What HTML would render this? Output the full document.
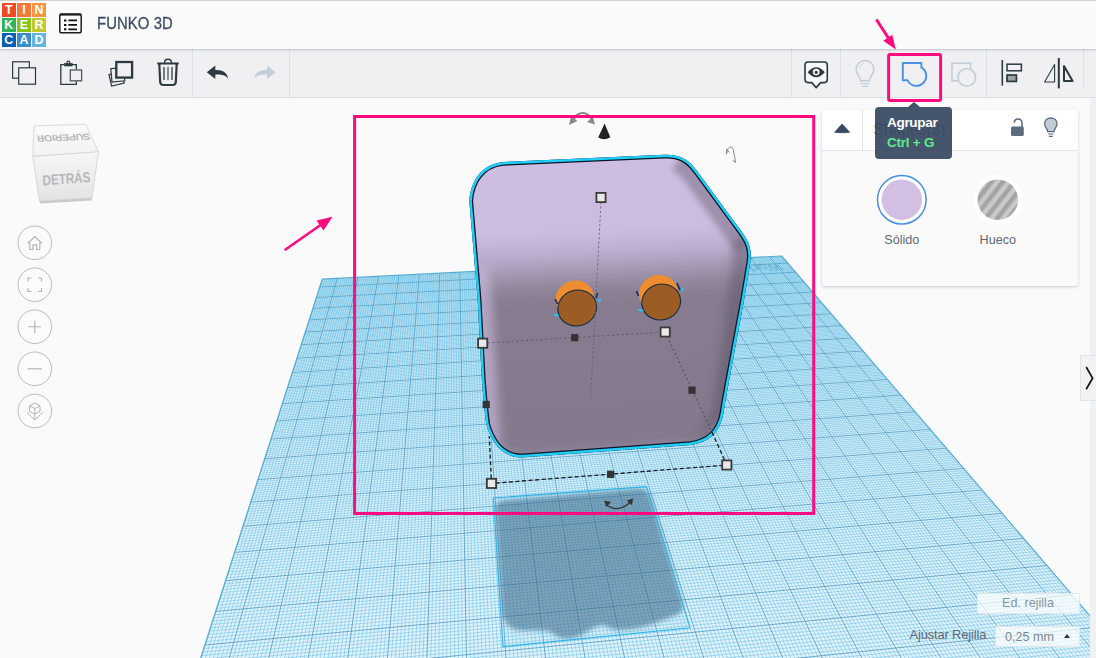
<!DOCTYPE html>
<html lang="es"><head><meta charset="utf-8"><title>FUNKO 3D</title>
<style>
html,body{margin:0;padding:0}
body{width:1096px;height:658px;overflow:hidden;position:relative;background:#fafafa;font-family:"Liberation Sans",sans-serif;color:#4a5a6a}
.abs{position:absolute}
#scene{position:absolute;left:0;top:0;width:1096px;height:658px}
#hdr{position:absolute;left:0;top:0;width:1096px;height:49px;background:#fafafb;box-shadow:0 1px 2px rgba(120,140,170,.45)}
#topline{position:absolute;left:0;top:0;width:1096px;height:1px;background:#cfcfcf}
#logo{position:absolute;left:2px;top:3px;width:44px;height:44px}
#logo i{position:absolute;width:13.7px;height:13.8px;font:bold 12.4px/14px "Liberation Sans",sans-serif;color:#fff;text-align:center;font-style:normal}
#title{position:absolute;left:97px;top:14px;font-size:16.8px;line-height:20px;color:#3b4d63;letter-spacing:0.1px;white-space:nowrap;transform:scaleX(0.885);transform-origin:0 0;-webkit-text-stroke:0.3px #3b4d63}
#tb{position:absolute;left:0;top:49px;width:1096px;height:48px;background:#f0f0f3;border-bottom:1px solid #d9dfe7}
.sep{position:absolute;top:49px;width:1px;height:48px;background:#d9e0e7}
#strip{position:absolute;left:1090px;top:98px;width:6px;height:560px;background:#f0f1f3}
#handle{position:absolute;left:1080px;top:355px;width:16px;height:46px;background:#f1f2f4;border:1px solid #dfe3ea;border-right:none;box-sizing:border-box}
#panel{position:absolute;left:822px;top:110px;width:256px;height:175.5px;background:#fafafa;border-radius:3px;box-shadow:0 1px 3px rgba(100,120,150,.35)}
#phead{position:absolute;left:0;top:0;width:256px;height:40px;background:#fff;border-bottom:1px solid #e1e6ec;border-radius:3px 3px 0 0}
#pdiv{position:absolute;left:40px;top:0;width:1px;height:40px;background:#e1e6ec}
#shapes{position:absolute;left:51.5px;top:10px;font-size:15.6px;line-height:20px;color:#33435a;letter-spacing:0px}
.lbl{position:absolute;top:232.6px;width:80px;text-align:center;font-size:12.6px;line-height:15px;color:#5d6976}
#tip{position:absolute;left:875px;top:107px;width:77px;height:52px;background:rgba(58,76,100,.95);border-radius:4px}
#tip:before{content:"";position:absolute;left:32.5px;top:-5px;border:6px solid transparent;border-top:none;border-bottom:5px solid rgba(58,76,100,.97)}
#tip b{position:absolute;left:12px;top:8px;font-size:13.6px;line-height:15px;color:#fff;letter-spacing:-0.35px}
#tip span{position:absolute;left:12px;top:28px;font-size:13.4px;line-height:15px;color:#62ea90;letter-spacing:-0.2px;font-weight:bold}
#edr{position:absolute;left:976.5px;top:593px;width:103px;height:21px;box-sizing:border-box;background:rgba(255,255,255,.72);border:1px solid rgba(225,228,232,.9);border-radius:2px;text-align:center;font-size:12.6px;line-height:19px;color:#8896a4}
#aj{position:absolute;left:909.5px;top:626.5px;font-size:12.8px;line-height:16px;color:#5d6873;white-space:nowrap;letter-spacing:-0.1px}
#dd{position:absolute;left:995px;top:625.5px;width:84.5px;height:21px;box-sizing:border-box;background:rgba(255,255,255,.72);border:1px solid rgba(225,228,232,.9);border-radius:2px;font-size:12.6px;line-height:20px;color:#7a8794;padding-left:9px}
#dd:after{content:"";position:absolute;left:68px;top:7.5px;border:3.2px solid transparent;border-top:none;border-bottom:4px solid #333}
</style></head><body>

<svg id="scene" width="1096" height="658" viewBox="0 0 1096 658">
<defs>
<clipPath id="wpclip"><rect x="0" y="98" width="1090" height="560"/></clipPath>
<clipPath id="planeclip"><polygon points="322.3,279.2 781.8,256.0 1135.7,669.3 162.7,776.3"/></clipPath>
<filter id="blur6" x="-20%" y="-20%" width="140%" height="140%"><feGaussianBlur stdDeviation="5"/></filter>
<filter id="blur2" x="-20%" y="-20%" width="140%" height="140%"><feGaussianBlur stdDeviation="2.2"/></filter>
<filter id="blur3" x="-20%" y="-20%" width="140%" height="140%"><feGaussianBlur stdDeviation="3"/></filter>
<filter id="blur10" x="-30%" y="-30%" width="160%" height="160%"><feGaussianBlur stdDeviation="9"/></filter>
<linearGradient id="gfront" gradientUnits="userSpaceOnUse" x1="600" y1="155" x2="613" y2="458">
<stop offset="0" stop-color="#cdbde1"/><stop offset="0.24" stop-color="#ccbce0"/><stop offset="0.274" stop-color="#c7b7db"/><stop offset="0.313" stop-color="#beafd1"/><stop offset="0.353" stop-color="#b0a2bf"/><stop offset="0.393" stop-color="#a094ad"/><stop offset="0.426" stop-color="#93889d"/><stop offset="0.459" stop-color="#8a7f93"/><stop offset="0.5" stop-color="#867b8f"/><stop offset="1" stop-color="#84798d"/>
</linearGradient>
<linearGradient id="gleft" x1="0" y1="0" x2="1" y2="0"><stop offset="0" stop-color="#c9b9dc" stop-opacity=".95"/><stop offset="1" stop-color="#c9b9dc" stop-opacity="0"/></linearGradient>
<linearGradient id="gright" x1="0" y1="0" x2="1" y2="0"><stop offset="0" stop-color="#5d5466" stop-opacity="0"/><stop offset="1" stop-color="#5d5466" stop-opacity=".75"/></linearGradient>
<clipPath id="boxclip"><path id="boxpath" d="M469.3 201 C470.5 183 480 164.5 503 162 L664 154.8 C680 154.2 688.5 159.5 697 171 L741.5 231.5 C749.5 242.5 752 250 750.3 262 L744 300 L725.5 400 L723.4 413 C720.5 430 711 442.5 690 445 L524 457.2 C505 458.3 492.5 446 486.2 424 L484 405 L481.9 380 L477.7 300 Z"/></clipPath>
</defs>
<g clip-path="url(#wpclip)">
<polygon points="322.3,279.2 781.8,256.0 1135.7,669.3 162.7,776.3" fill="#e0f2fa"/>
<g clip-path="url(#planeclip)">
<path d="M322.7 279.2L163.7 776.2M324.8 279.1L168.4 775.7M326.9 279.0L173.1 775.1M329.0 278.9L177.8 774.6M331.0 278.8L182.5 774.1M333.1 278.7L187.2 773.6M335.2 278.5L191.9 773.1M339.3 278.3L201.2 772.1M341.4 278.2L205.9 771.5M343.5 278.1L210.6 771.0M345.6 278.0L215.2 770.5M347.6 277.9L219.9 770.0M349.7 277.8L224.5 769.5M351.8 277.7L229.2 769.0M353.8 277.6L233.8 768.5M355.9 277.5L238.4 768.0M360.0 277.3L247.7 766.9M362.1 277.2L252.3 766.4M364.1 277.1L256.9 765.9M366.2 277.0L261.5 765.4M368.3 276.9L266.1 764.9M370.3 276.8L270.7 764.4M372.4 276.7L275.3 763.9M374.4 276.6L279.9 763.4M376.5 276.5L284.5 762.9M380.6 276.3L293.6 761.9M382.6 276.2L298.2 761.4M384.7 276.0L302.7 760.9M386.7 275.9L307.3 760.4M388.8 275.8L311.8 759.9M390.8 275.7L316.4 759.4M392.9 275.6L320.9 758.9M394.9 275.5L325.5 758.4M397.0 275.4L330.0 757.9M401.1 275.2L339.0 756.9M403.1 275.1L343.5 756.4M405.1 275.0L348.1 755.9M407.2 274.9L352.6 755.4M409.2 274.8L357.1 754.9M411.3 274.7L361.5 754.4M413.3 274.6L366.0 753.9M415.3 274.5L370.5 753.4M417.4 274.4L375.0 752.9M421.4 274.2L383.9 752.0M423.5 274.1L388.4 751.5M425.5 274.0L392.9 751.0M427.5 273.9L397.3 750.5M429.6 273.8L401.8 750.0M431.6 273.7L406.2 749.5M433.6 273.6L410.6 749.0M435.6 273.5L415.1 748.5M437.7 273.4L419.5 748.1M441.7 273.2L428.3 747.1M443.7 273.1L432.8 746.6M445.7 273.0L437.2 746.1M447.8 272.9L441.6 745.6M449.8 272.8L446.0 745.1M451.8 272.7L450.4 744.7M453.8 272.6L454.8 744.2M455.8 272.5L459.1 743.7M457.8 272.4L463.5 743.2M461.9 272.2L472.3 742.3M463.9 272.1L476.6 741.8M465.9 272.0L481.0 741.3M467.9 271.8L485.3 740.8M469.9 271.7L489.7 740.3M471.9 271.6L494.0 739.9M473.9 271.5L498.4 739.4M475.9 271.4L502.7 738.9M477.9 271.3L507.0 738.4M481.9 271.1L515.7 737.5M483.9 271.0L520.0 737.0M485.9 270.9L524.3 736.5M487.9 270.8L528.6 736.1M489.9 270.7L532.9 735.6M491.9 270.6L537.2 735.1M493.9 270.5L541.5 734.6M495.9 270.4L545.8 734.2M497.9 270.3L550.1 733.7M501.9 270.1L558.7 732.8M503.9 270.0L562.9 732.3M505.8 269.9L567.2 731.8M507.8 269.8L571.5 731.3M509.8 269.7L575.7 730.9M511.8 269.6L580.0 730.4M513.8 269.5L584.2 729.9M515.8 269.4L588.5 729.5M517.8 269.3L592.7 729.0M521.7 269.1L601.2 728.1M523.7 269.0L605.4 727.6M525.7 268.9L609.6 727.2M527.7 268.8L613.8 726.7M529.6 268.7L618.0 726.2M531.6 268.6L622.2 725.8M533.6 268.5L626.4 725.3M535.6 268.4L630.6 724.8M537.5 268.3L634.8 724.4M541.5 268.1L643.2 723.5M543.5 268.0L647.4 723.0M545.4 267.9L651.5 722.5M547.4 267.8L655.7 722.1M549.4 267.7L659.9 721.6M551.3 267.6L664.0 721.2M553.3 267.5L668.2 720.7M555.3 267.4L672.3 720.3M557.2 267.3L676.5 719.8M561.1 267.1L684.8 718.9M563.1 267.0L688.9 718.4M565.1 266.9L693.0 718.0M567.0 266.8L697.2 717.5M569.0 266.7L701.3 717.1M570.9 266.6L705.4 716.6M572.9 266.5L709.5 716.2M574.8 266.4L713.6 715.7M576.8 266.4L717.7 715.3M580.7 266.2L725.9 714.4M582.6 266.1L730.0 713.9M584.6 266.0L734.1 713.5M586.5 265.9L738.2 713.0M588.5 265.8L742.2 712.6M590.4 265.7L746.3 712.1M592.4 265.6L750.4 711.7M594.3 265.5L754.4 711.2M596.3 265.4L758.5 710.8M600.2 265.2L766.6 709.9M602.1 265.1L770.7 709.4M604.0 265.0L774.7 709.0M606.0 264.9L778.7 708.6M607.9 264.8L782.8 708.1M609.9 264.7L786.8 707.7M611.8 264.6L790.8 707.2M613.7 264.5L794.9 706.8M615.7 264.4L798.9 706.3M619.5 264.2L806.9 705.5M621.5 264.1L810.9 705.0M623.4 264.0L814.9 704.6M625.3 263.9L818.9 704.1M627.2 263.8L822.9 703.7M629.2 263.7L826.9 703.3M631.1 263.6L830.8 702.8M633.0 263.5L834.8 702.4M634.9 263.4L838.8 702.0M638.8 263.2L846.7 701.1M640.7 263.1L850.7 700.6M642.6 263.0L854.7 700.2M644.6 262.9L858.6 699.8M646.5 262.8L862.6 699.3M648.4 262.7L866.5 698.9M650.3 262.6L870.4 698.5M652.2 262.5L874.4 698.0M654.1 262.4L878.3 697.6M658.0 262.3L886.2 696.7M659.9 262.2L890.1 696.3M661.8 262.1L894.0 695.9M663.7 262.0L897.9 695.5M665.6 261.9L901.8 695.0M667.5 261.8L905.7 694.6M669.4 261.7L909.6 694.2M671.3 261.6L913.5 693.7M673.2 261.5L917.4 693.3M677.0 261.3L925.2 692.5M678.9 261.2L929.1 692.0M680.9 261.1L932.9 691.6M682.8 261.0L936.8 691.2M684.7 260.9L940.7 690.7M686.5 260.8L944.6 690.3M688.4 260.7L948.4 689.9M690.3 260.6L952.3 689.5M692.2 260.5L956.1 689.1M696.0 260.3L963.8 688.2M697.9 260.2L967.7 687.8M699.8 260.1L971.5 687.4M701.7 260.0L975.3 686.9M703.6 259.9L979.1 686.5M705.5 259.9L983.0 686.1M707.4 259.8L986.8 685.7M709.3 259.7L990.6 685.3M711.2 259.6L994.4 684.8M714.9 259.4L1002.0 684.0M716.8 259.3L1005.8 683.6M718.7 259.2L1009.6 683.2M720.6 259.1L1013.4 682.8M722.5 259.0L1017.2 682.3M724.3 258.9L1021.0 681.9M726.2 258.8L1024.8 681.5M728.1 258.7L1028.6 681.1M730.0 258.6L1032.3 680.7M733.7 258.4L1039.9 679.8M735.6 258.3L1043.6 679.4M737.5 258.2L1047.4 679.0M739.3 258.1L1051.1 678.6M741.2 258.0L1054.9 678.2M743.1 258.0L1058.6 677.8M745.0 257.9L1062.4 677.4M746.8 257.8L1066.1 677.0M748.7 257.7L1069.8 676.5M752.4 257.5L1077.3 675.7M754.3 257.4L1081.0 675.3M756.2 257.3L1084.7 674.9M758.0 257.2L1088.5 674.5M759.9 257.1L1092.2 674.1M761.7 257.0L1095.9 673.7M763.6 256.9L1099.6 673.3M765.5 256.8L1103.3 672.9M767.3 256.7L1107.0 672.5M771.0 256.5L1114.4 671.7M772.9 256.4L1118.1 671.2M774.8 256.4L1121.7 670.8M776.6 256.3L1125.4 670.4M778.5 256.2L1129.1 670.0M780.3 256.1L1132.8 669.6M322.0 280.2L782.5 256.9M321.7 281.2L783.3 257.7M321.4 282.1L784.0 258.6M321.0 283.1L784.8 259.5M320.7 284.1L785.5 260.4M320.4 285.1L786.3 261.3M320.1 286.1L787.1 262.2M319.4 288.2L788.6 263.9M319.1 289.2L789.4 264.9M318.8 290.2L790.2 265.8M318.4 291.2L790.9 266.7M318.1 292.3L791.7 267.6M317.8 293.3L792.5 268.5M317.4 294.3L793.3 269.4M317.1 295.4L794.1 270.4M316.8 296.4L794.9 271.3M316.1 298.6L796.5 273.2M315.7 299.6L797.3 274.1M315.4 300.7L798.1 275.1M315.0 301.8L799.0 276.0M314.7 302.9L799.8 277.0M314.3 304.0L800.6 278.0M314.0 305.1L801.4 278.9M313.6 306.2L802.3 279.9M313.3 307.3L803.1 280.9M312.6 309.5L804.8 282.9M312.2 310.7L805.6 283.8M311.8 311.8L806.5 284.8M311.5 312.9L807.4 285.8M311.1 314.1L808.2 286.9M310.7 315.2L809.1 287.9M310.4 316.4L810.0 288.9M310.0 317.5L810.8 289.9M309.6 318.7L811.7 290.9M308.9 321.1L813.5 293.0M308.5 322.2L814.4 294.0M308.1 323.4L815.3 295.1M307.7 324.6L816.2 296.1M307.3 325.8L817.1 297.2M306.9 327.1L818.0 298.3M306.5 328.3L818.9 299.3M306.2 329.5L819.8 300.4M305.8 330.7L820.8 301.5M305.0 333.2L822.6 303.7M304.6 334.5L823.6 304.8M304.2 335.7L824.5 305.9M303.8 337.0L825.4 307.0M303.3 338.3L826.4 308.1M302.9 339.5L827.4 309.2M302.5 340.8L828.3 310.3M302.1 342.1L829.3 311.5M301.7 343.4L830.3 312.6M300.8 346.0L832.2 314.9M300.4 347.4L833.2 316.0M300.0 348.7L834.2 317.2M299.6 350.0L835.2 318.4M299.1 351.4L836.2 319.5M298.7 352.7L837.2 320.7M298.3 354.1L838.2 321.9M297.8 355.5L839.3 323.1M297.4 356.8L840.3 324.3M296.5 359.6L842.3 326.7M296.0 361.0L843.4 327.9M295.6 362.4L844.4 329.2M295.1 363.8L845.5 330.4M294.7 365.3L846.5 331.6M294.2 366.7L847.6 332.9M293.8 368.1L848.7 334.1M293.3 369.6L849.8 335.4M292.8 371.0L850.8 336.6M291.9 374.0L853.0 339.2M291.4 375.5L854.1 340.5M290.9 377.0L855.2 341.8M290.4 378.5L856.3 343.1M290.0 380.0L857.5 344.4M289.5 381.5L858.6 345.7M289.0 383.0L859.7 347.0M288.5 384.5L860.9 348.3M288.0 386.1L862.0 349.7M287.0 389.2L864.3 352.4M286.5 390.8L865.5 353.7M286.0 392.4L866.6 355.1M285.5 394.0L867.8 356.5M284.9 395.6L869.0 357.8M284.4 397.2L870.2 359.2M283.9 398.8L871.4 360.6M283.4 400.4L872.6 362.0M282.9 402.1L873.8 363.4M281.8 405.4L876.2 366.3M281.3 407.1L877.5 367.7M280.7 408.8L878.7 369.2M280.2 410.5L880.0 370.6M279.6 412.2L881.2 372.1M279.1 413.9L882.5 373.6M278.5 415.6L883.7 375.0M278.0 417.4L885.0 376.5M277.4 419.1L886.3 378.0M276.3 422.6L888.9 381.1M275.7 424.4L890.2 382.6M275.1 426.2L891.5 384.1M274.5 428.0L892.8 385.7M273.9 429.9L894.2 387.2M273.4 431.7L895.5 388.8M272.8 433.5L896.8 390.4M272.2 435.4L898.2 391.9M271.6 437.3L899.6 393.5M270.4 441.0L902.3 396.7M269.7 442.9L903.7 398.4M269.1 444.9L905.1 400.0M268.5 446.8L906.5 401.6M267.9 448.7L907.9 403.3M267.3 450.7L909.3 404.9M266.6 452.7L910.8 406.6M266.0 454.7L912.2 408.3M265.3 456.7L913.7 410.0M264.0 460.7L916.6 413.4M263.4 462.7L918.1 415.1M262.7 464.8L919.5 416.9M262.1 466.9L921.0 418.6M261.4 469.0L922.6 420.4M260.7 471.1L924.1 422.2M260.0 473.2L925.6 423.9M259.4 475.3L927.1 425.7M258.7 477.4L928.7 427.5M257.3 481.8L931.8 431.2M256.6 484.0L933.4 433.0M255.9 486.2L935.0 434.9M255.2 488.4L936.6 436.7M254.4 490.6L938.2 438.6M253.7 492.9L939.8 440.5M253.0 495.2L941.4 442.4M252.3 497.4L943.1 444.3M251.5 499.7L944.7 446.3M250.0 504.4L948.0 450.2M249.3 506.8L949.7 452.1M248.5 509.1L951.4 454.1M247.7 511.5L953.1 456.1M247.0 513.9L954.9 458.1M246.2 516.4L956.6 460.1M245.4 518.8L958.3 462.2M244.6 521.3L960.1 464.2M243.8 523.8L961.9 466.3M242.2 528.8L965.4 470.5M241.4 531.3L967.2 472.6M240.6 533.9L969.1 474.7M239.7 536.5L970.9 476.8M238.9 539.1L972.7 479.0M238.0 541.7L974.6 481.2M237.2 544.3L976.5 483.3M236.3 547.0L978.4 485.5M235.5 549.7L980.2 487.8M233.7 555.1L984.1 492.3M232.9 557.9L986.0 494.5M232.0 560.6L988.0 496.8M231.1 563.4L990.0 499.1M230.2 566.3L991.9 501.4M229.3 569.1L993.9 503.7M228.3 572.0L995.9 506.1M227.4 574.8L998.0 508.5M226.5 577.8L1000.0 510.9M224.6 583.7L1004.2 515.7M223.6 586.6L1006.2 518.1M222.7 589.6L1008.3 520.6M221.7 592.7L1010.5 523.1M220.7 595.7L1012.6 525.6M219.7 598.8L1014.8 528.1M218.7 601.9L1016.9 530.6M217.7 605.1L1019.1 533.2M216.7 608.3L1021.3 535.7M214.6 614.7L1025.8 541.0M213.6 617.9L1028.1 543.6M212.5 621.2L1030.3 546.3M211.5 624.5L1032.6 548.9M210.4 627.9L1034.9 551.6M209.3 631.2L1037.3 554.4M208.2 634.6L1039.6 557.1M207.1 638.0L1042.0 559.9M206.0 641.5L1044.4 562.7M203.8 648.5L1049.2 568.3M202.6 652.1L1051.6 571.2M201.5 655.7L1054.1 574.0M200.3 659.3L1056.6 576.9M199.1 662.9L1059.1 579.9M197.9 666.6L1061.6 582.8M196.8 670.4L1064.2 585.8M195.5 674.1L1066.8 588.8M194.3 677.9L1069.4 591.8M191.9 685.6L1074.6 598.0M190.6 689.5L1077.3 601.1M189.3 693.4L1079.9 604.2M188.1 697.4L1082.7 607.4M186.8 701.4L1085.4 610.6M185.5 705.5L1088.1 613.8M184.2 709.6L1090.9 617.0M182.8 713.7L1093.7 620.3M181.5 717.9L1096.5 623.6M178.8 726.4L1102.3 630.3M177.4 730.7L1105.2 633.7M176.0 735.1L1108.1 637.1M174.6 739.5L1111.1 640.5M173.1 743.9L1114.0 644.0M171.7 748.4L1117.0 647.5M170.3 752.9L1120.1 651.1M168.8 757.5L1123.1 654.7M167.3 762.1L1126.2 658.3M164.3 771.5L1132.5 665.6" stroke="#4bb4e1" stroke-width="0.8" stroke-opacity="0.5" fill="none"/>
<path d="M337.3 278.4L196.6 772.6M358.0 277.4L243.1 767.5M378.5 276.4L289.0 762.4M399.0 275.3L334.5 757.4M419.4 274.3L379.5 752.5M439.7 273.3L423.9 747.6M459.8 272.3L467.9 742.7M479.9 271.2L511.4 738.0M499.9 270.2L554.4 733.2M519.7 269.2L596.9 728.5M539.5 268.2L639.0 723.9M559.2 267.2L680.6 719.3M578.7 266.3L721.8 714.8M598.2 265.3L762.6 710.3M617.6 264.3L802.9 705.9M636.9 263.3L842.8 701.5M656.1 262.3L882.2 697.2M675.1 261.4L921.3 692.9M694.1 260.4L960.0 688.6M713.0 259.5L998.2 684.4M731.8 258.5L1036.1 680.3M750.6 257.6L1073.6 676.1M769.2 256.6L1110.7 672.1M319.8 287.1L787.8 263.1M316.4 297.5L795.7 272.2M312.9 308.4L803.9 281.9M309.2 319.9L812.6 292.0M305.4 332.0L821.7 302.6M301.3 344.7L831.2 313.7M296.9 358.2L841.3 325.5M292.4 372.5L851.9 337.9M287.5 387.7L863.1 351.0M282.3 403.7L875.0 364.9M276.8 420.9L887.6 379.5M271.0 439.1L900.9 395.1M264.7 458.7L915.1 411.7M258.0 479.6L930.2 429.4M250.8 502.1L946.4 448.2M243.0 526.3L963.6 468.4M234.6 552.4L982.2 490.0M225.5 580.7L1002.1 513.3M215.7 611.4L1023.6 538.3M204.9 645.0L1046.8 565.5M193.1 681.7L1072.0 594.9M180.1 722.1L1099.4 626.9M165.8 766.8L1129.4 661.9" stroke="#4496c0" stroke-width="1" stroke-opacity="0.75" fill="none"/>
</g>
<text transform="matrix(-1.55 0.08 -0.9 -1.05 778.5 263.4)" font-family="Liberation Sans, sans-serif" font-weight="bold" font-size="9.5" fill="#3f98c4" fill-opacity="0.4">Workplane</text>
<polygon points="322.3,279.2 781.8,256.0 1135.7,669.3 162.7,776.3" fill="none" stroke="#55aad3" stroke-width="1.2"/>
<!-- shadow -->
<g clip-path="url(#planeclip)">
<path d="M495.6 510 Q494.8 501.8 503 500.6 L638 488.8 Q647 488.2 650.5 497 L683 604 Q684 611 678 614 Q667 619 647 625.7 Q630 630 618.6 630 Q611 629.5 606 625.7 Q602 624.5 598.6 625.7 Q590 629 584.3 633 Q575 638.5 567 638.6 Q560 638.2 555.7 635.7 Q550 631 545 630.6 L521.4 630.6 Q511 629.5 507 624.3 Q503 619 502 612 L498.6 555.7 Z" fill="#22496b" fill-opacity="0.5" filter="url(#blur2)"/>
</g>
<polygon points="493.4,498 646.6,486.6 690,627.7 502.9,646.6" fill="#8fd0ee" fill-opacity="0.12" stroke="#2fb4e6" stroke-width="1.15"/>
</g>

<g>
<path d="M469.3 201 C470.5 183 480 164.5 503 162 L664 154.8 C680 154.2 688.5 159.5 697 171 L741.5 231.5 C749.5 242.5 752 250 750.3 262 L744 300 L725.5 400 L723.4 413 C720.5 430 711 442.5 690 445 L524 457.2 C505 458.3 492.5 446 486.2 424 L484 405 L481.9 380 L477.7 300 Z" fill="url(#gfront)"/>
<g clip-path="url(#boxclip)">
<!-- top-right chamfer shading -->
<path d="M684 152 L704 166 L756 240 L736 252 L688 186 C684 180 680 175 672 170 Z" fill="#7f748a" fill-opacity="0.62" filter="url(#blur3)"/>
<!-- right side darker -->
<path d="M756 236 L748 300 L726 420 L704 452 L694 446 L712 410 L728 300 L734 240 Z" fill="#574e61" fill-opacity="0.45" filter="url(#blur6)"/>
<!-- left light band -->
<path d="M462 266 L468 300 L476 405 L480 440 L502 466 L498 400 L492 300 L488 266 Z" fill="#cdbde1" fill-opacity="0.62" filter="url(#blur6)"/>
<!-- bottom rim slightly lighter -->
<path d="M492 444 L520 463 L700 451 L728 424 L718 420 L694 439 L522 451 Z" fill="#ad9fba" fill-opacity="0.22" filter="url(#blur3)"/>
<path d="M469.3 201 C470.5 183 480 164.5 503 162 L664 154.8 C680 154.2 688.5 159.5 697 171 L741.5 231.5 C749.5 242.5 752 250 750.3 262 L744 300 L725.5 400 L723.4 413 C720.5 430 711 442.5 690 445 L524 457.2 C505 458.3 492.5 446 486.2 424 L484 405 L481.9 380 L477.7 300 Z" fill="none" stroke="#0d1626" stroke-width="7.6" stroke-linejoin="round"/>
<path d="M469.3 201 C470.5 183 480 164.5 503 162 L664 154.8 C680 154.2 688.5 159.5 697 171 L741.5 231.5 C749.5 242.5 752 250 750.3 262 L744 300 L725.5 400 L723.4 413 C720.5 430 711 442.5 690 445 L524 457.2 C505 458.3 492.5 446 486.2 424 L484 405 L481.9 380 L477.7 300 Z" fill="none" stroke="#1fcff8" stroke-width="5" stroke-linejoin="round"/>
</g>
</g>

<g>
<ellipse cx="574.7" cy="298.5" rx="19.5" ry="17.8" transform="rotate(-18 574.7 298.5)" fill="#ee8d2f"/>
<path d="M558.7 305 L556.2 295.5 L592.2 291.5 L595.7 302 Z" fill="#ee8d2f"/>
<ellipse cx="577.2" cy="308" rx="19.5" ry="17.8" transform="rotate(-18 577.2 308)" fill="#9b5d24" stroke="#142c47" stroke-width="1.1"/>
</g>
<g>
<ellipse cx="658.2" cy="293" rx="19.5" ry="17.8" transform="rotate(-18 658.2 293)" fill="#ee8d2f"/>
<path d="M642.7 299 L639.7 290 L675.7 286 L679.7 296 Z" fill="#ee8d2f"/>
<ellipse cx="661.2" cy="302" rx="19.5" ry="17.8" transform="rotate(-18 661.2 302)" fill="#9b5d24" stroke="#142c47" stroke-width="1.1"/>
</g>
<path d="M557.5 304 l-2.5 -5 M596 298 l1.5 -5 M638.5 296 l-2 -5 M680 290 l-3 -7" stroke="#142c47" stroke-width="1.6" fill="none"/>
<path d="M555 314.5 l3 1.2 M599 301 l1.8 -2 M639 310 l3.5 0.5 M681.5 290.5 l1.5 -2" stroke="#24c4f2" stroke-width="2" fill="none" stroke-linecap="round"/>

<path d="M601 202 L590.7 396.5" stroke="#6a6370" stroke-width="0.9" stroke-dasharray="2.2 2.2" fill="none"/>
<path d="M482.7 343.2 L665.2 332" stroke="#5b5560" stroke-width="0.9" stroke-dasharray="2.2 2.6" fill="none"/>
<path d="M665.2 332 L712 432" stroke="#4b4650" stroke-width="0.9" stroke-dasharray="2.2 2.4" fill="none"/>
<path d="M712 432 L726.8 465 L491.5 483.4 L489.3 436" stroke="#1d1d1d" stroke-width="1.3" stroke-dasharray="4 2.6" fill="none"/>
<rect x="596.4" y="192.9" width="9.2" height="9.2" fill="#e9e9e9" stroke="#3a3a3a" stroke-width="1.8"/><rect x="478.09999999999997" y="338.59999999999997" width="9.2" height="9.2" fill="#e9e9e9" stroke="#3a3a3a" stroke-width="1.8"/><rect x="660.6" y="327.4" width="9.2" height="9.2" fill="#e9e9e9" stroke="#3a3a3a" stroke-width="1.8"/><rect x="722.1999999999999" y="460.4" width="9.2" height="9.2" fill="#e9e9e9" stroke="#3a3a3a" stroke-width="1.8"/><rect x="486.9" y="478.79999999999995" width="9.2" height="9.2" fill="#e9e9e9" stroke="#3a3a3a" stroke-width="1.8"/><rect x="571.1" y="334.09999999999997" width="7.2" height="7.2" fill="#333"/><rect x="688.4" y="386.59999999999997" width="7.2" height="7.2" fill="#333"/><rect x="482.59999999999997" y="400.9" width="7.2" height="7.2" fill="#333"/><rect x="607.0" y="470.7" width="7.2" height="7.2" fill="#333"/>
<path d="M573.2 121.5 C576 110.2 589 110.2 591.8 120.5" stroke="#8a8a8a" stroke-width="2" fill="none"/>
<path d="M569 125 l2 -8.5 l6.5 4.5 z M595 124.5 l-8 -2.5 l6 -5 z" fill="#8a8a8a"/>
<path d="M604.6 123.4 L610.3 137.2 Q604.5 141 598.2 137.6 Z" fill="#222"/>
<path d="M727 153 C727 146 733 145 733.5 151 C734 155 735 157 735.5 162 M726.2 154.5 l0.5 -5 l3 3 M735.5 163 l-2.5 -3" stroke="#777" stroke-width="0.9" fill="none"/>
<path d="M606 504.5 Q618 514 631 501.5" stroke="#333" stroke-width="1.4" fill="none"/>
<path d="M604.2 500.5 l6.8 1.6 l-4.8 4.8 z M633.2 498.2 l-1.3 7 l-5.2 -4.6 z" fill="#333"/>


</svg>


<svg class="abs" style="left:0;top:100px" width="160" height="340" viewBox="0 100 160 340">
<defs>
<linearGradient id="cf" x1="0" y1="0" x2="0" y2="1"><stop offset="0" stop-color="#f6f6f6"/><stop offset="1" stop-color="#e3e3e3"/></linearGradient>
<linearGradient id="ct" x1="0" y1="0" x2="0" y2="1"><stop offset="0" stop-color="#fbfbfb"/><stop offset="1" stop-color="#f2f2f2"/></linearGradient>
</defs>
<polygon points="39.6,201 92,197.8 91.6,200.4 40.2,203.6" fill="#c9c9c9"/>
<polygon points="34,126 85.6,124.3 98.5,151.8 32.8,156.4" fill="url(#ct)" stroke="#d2d2d2" stroke-width="0.8"/>
<polygon points="32.8,156.4 98.5,151.8 92,197.8 39.4,201" fill="url(#cf)" stroke="#d2d2d2" stroke-width="0.8"/>
<text transform="matrix(-1.0 0.035 -0.2 -0.86 89.2 133.6)" font-family="Liberation Sans, sans-serif" font-weight="bold" font-size="10.6" fill="#b9b9bd" letter-spacing="-0.3">SUPERIOR</text>
<text transform="matrix(0.81 -0.057 0.05 1 42.8 185.4)" font-family="Liberation Sans, sans-serif" font-weight="bold" font-size="14.6" fill="#b7b7bd" letter-spacing="-0.2">DETRÁS</text>
<g fill="#fbfbfb" stroke="#b1b4b9" stroke-width="0.9">
<circle cx="34.8" cy="242.8" r="16.8"/><circle cx="34.8" cy="284.7" r="16.8"/><circle cx="34.8" cy="326.7" r="16.8"/><circle cx="34.8" cy="368.8" r="16.8"/><circle cx="34.8" cy="411" r="16.8"/>
</g>
<g fill="none" stroke="#b1b4b9" stroke-width="1.15">
<path d="M27.5 243.5 L34.8 236.5 L42.1 243.5 M29.8 242.5 V249.5 H33 V244.8 H36.6 V249.5 H39.8 V242.5"/>
<path d="M28 281.5 V278 H31.5 M38 278 H41.5 V281.5 M41.5 288 V291.5 H38 M31.5 291.5 H28 V288"/>
<path d="M28.5 326.7 H41 M34.8 320.4 V333"/>
<path d="M27.5 368.8 H42"/>
<path d="M34.8 403 L40 405.8 V411.5 L34.8 414.3 L29.6 411.5 V405.8 Z M29.6 405.8 L34.8 408.6 L40 405.8 M34.8 408.6 V419.5 M27 412.5 L34.8 420 L42.6 412.5" stroke-width="1"/>
</g>
</svg>

<div id="strip"></div>
<div id="handle"><svg width="16" height="45" viewBox="0 0 16 45" style="position:absolute;left:-1px;top:-1px"><path d="M6.2 12 L12.6 23.2 L6.2 34.2" fill="none" stroke="#111" stroke-width="1.7"/></svg></div>
<div id="panel"><div id="phead"><div id="pdiv"></div><div id="shapes">Shapes(3)</div></div></div>

<svg class="abs" style="left:822px;top:110px" width="256" height="176" viewBox="822 110 256 176">
<path d="M834.6 132.2 L842.1 124 L849.6 132.2 Q842 133.4 834.6 132.2 Z" fill="#39495f" stroke="#39495f" stroke-width="0.8" stroke-linejoin="round"/>
<!-- lock -->
<path d="M1022 127 V123.2 Q1021.8 119 1018 119 Q1014.6 119 1014.2 122.6" fill="none" stroke="#5b6b7e" stroke-width="1.6"/>
<rect x="1011" y="126.4" width="12.8" height="9.6" rx="1.6" fill="#5b6b7e"/>
<!-- bulb -->
<path d="M1047.6 131.6 C1047.6 128.6 1044.6 127.6 1044.6 123.8 C1044.6 120.2 1047.3 118 1050.8 118 C1054.3 118 1057 120.2 1057 123.8 C1057 127.6 1054 128.6 1054 131.6 Z" fill="#c3ccd6" stroke="#5b6b7e" stroke-width="1.3"/>
<path d="M1048 134 H1053.6 M1048.8 136.4 H1052.8" stroke="#5b6b7e" stroke-width="1.1"/>
<!-- solid -->
<circle cx="901.8" cy="199.7" r="24.3" fill="#fff" stroke="#4a8fe2" stroke-width="1.5"/>
<circle cx="901.8" cy="199.7" r="20.2" fill="#d3bfe4"/>
<!-- hole -->
<defs><pattern id="stripes" width="9" height="9" patternUnits="userSpaceOnUse" patternTransform="rotate(-52)"><rect width="9" height="9" fill="#c9c9c9"/><rect width="9" height="4.5" fill="#a4a4a4"/></pattern></defs>
<circle cx="997.8" cy="199.7" r="24.8" fill="#fff"/>
<circle cx="997.8" cy="199.7" r="20.2" fill="url(#stripes)"/>
</svg>

<div class="lbl" style="left:861.8px">Sólido</div>
<div class="lbl" style="left:957.8px">Hueco</div>
<div id="edr">Ed. rejilla</div>
<div id="aj">Ajustar Rejilla</div>
<div id="dd">0,25 mm</div>
<div id="tb"></div>
<div class="sep" style="left:192px"></div><div class="sep" style="left:289px"></div><div class="sep" style="left:791px"></div><div class="sep" style="left:840px"></div><div class="sep" style="left:889px"></div><div class="sep" style="left:986px"></div><div class="sep" style="left:1083px;height:40px"></div>

<svg class="abs" style="left:0;top:49px" width="1096" height="49" viewBox="0 49 1096 49">
<!-- list icon lives in header, drawn in separate svg -->
<g fill="#f0f0f3" stroke="#2b3a40" stroke-width="1.2">
<rect x="12.6" y="61.8" width="16.8" height="16.4"/>
<rect x="18.7" y="67.8" width="16.8" height="16.4"/>
</g>
<!-- paste -->
<g fill="none" stroke="#2b3a40" stroke-width="1.3">
<path d="M64.5 64.6 H60.8 V84.3 H76.3 V81.2 M72 64.6 H76.3 V69.5"/>
<rect x="64.6" y="63.4" width="7.6" height="2.6" fill="#2b3a40" stroke-width="0.6"/><circle cx="68.4" cy="62.6" r="1.5" fill="none" stroke-width="1.1"/>
<rect x="70.3" y="70" width="11.3" height="10.8" stroke="#4d585c" fill="#f0f0f3"/>
</g>
<!-- duplicate -->
<g fill="#f0f0f3" stroke="#2b3a40" stroke-width="1.2">
<path d="M109 74.6 L121 71.8 L124.2 83 L111.6 86 Z"/>
<path d="M110.8 68.6 L123.6 67.6 L124.8 80.8 L112 82 Z"/>
<rect x="116.3" y="62" width="15.8" height="15.6" stroke-width="2.3"/>
</g>
<!-- trash -->
<g fill="none" stroke="#2b3a40" stroke-width="2" stroke-linecap="round">
<path d="M158 63.4 H178"/>
<path d="M164.6 62.6 Q164.6 59.2 168 59.2 Q171.4 59.2 171.4 62.6" stroke-width="1.4"/>
<path d="M159.3 64 L160.2 82 Q160.4 85 163.4 85 H172.6 Q175.6 85 175.8 82 L176.7 64" stroke-width="2.2"/>
<path d="M164 67.5 V79.5 M172 67.5 V79.5" stroke-width="1.3"/>
<path d="M168 67.5 V79.5" stroke-width="1.6" stroke="#6b7478"/>
</g>
<!-- undo -->
<path d="M206.8 72.3 L215.3 65.6 V70 C222.5 69.6 227.5 72.6 228.2 79 C226 75.4 222.2 74.4 215.3 74.6 V79 Z" fill="#2b3a40"/>
<!-- redo -->
<path d="M275.6 72.3 L267.1 65.6 V70 C259.9 69.6 254.9 72.6 254.2 79 C256.4 75.4 260.2 74.4 267.1 74.6 V79 Z" fill="#c3cfdb"/>
<!-- eye bubble -->
<g>
<path d="M808 62 H824.4 Q827.3 62 827.3 65 V79.6 Q827.3 82.6 824.4 82.6 H820.6 L816.2 87.6 L811.8 82.6 H808 Q805 82.6 805 79.6 V65 Q805 62 808 62 Z" fill="#f6f7f8" stroke="#2b3a40" stroke-width="1.6" stroke-linejoin="round"/>
<path d="M807.6 72.3 Q816.2 62.4 824.8 72.3 Q816.2 82.2 807.6 72.3 Z" fill="#2b3a40"/>
<ellipse cx="816.2" cy="72.1" rx="3.4" ry="3.3" fill="#f6f7f8"/>
<circle cx="816.2" cy="72.3" r="1.6" fill="#2b3a40"/>
</g>
<!-- bulb light -->
<g fill="none" stroke="#c3cfdb" stroke-width="1.7" stroke-linecap="round">
<path d="M860.6 80.8 C860.6 76.5 856.2 75 856.2 69.6 C856.2 64 860 60.6 865 60.6 C870 60.6 873.8 64 873.8 69.6 C873.8 75 869.4 76.5 869.4 80.8 Z"/>
<path d="M861 83.6 H869 M862.2 86.4 H867.8" stroke-width="1.4"/>
<path d="M859.6 68 Q860.4 64.6 863.4 63.6" stroke-width="0.9"/>
</g>
<!-- group (blue) -->
<path d="M902.8 63 H921.4 V67.6 C926.6 70.4 928 77.8 923.6 82.6 C919.4 87.2 912.4 87 908.6 82 L907.6 80.3 H902.8 Z" fill="none" stroke="#4a8fe2" stroke-width="1.9" stroke-linejoin="round"/>
<!-- ungroup (light) -->
<g fill="#f0f0f3" stroke="#c3cfdb" stroke-width="1.7">
<rect x="952" y="63.2" width="18.6" height="17.6"/>
<circle cx="966.8" cy="77.4" r="8.8"/>
</g>
<!-- align -->
<g fill="none" stroke="#2b3a40">
<path d="M1002.3 60 V85.6" stroke-width="1.6"/>
<rect x="1007" y="64.2" width="14.4" height="6.6" stroke-width="1.5"/>
<rect x="1007" y="75" width="9.4" height="6.4" stroke-width="1.7" fill="#9ea3a6"/>
</g>
<!-- mirror -->
<g stroke="#2b3a40" stroke-linejoin="round">
<path d="M1058.8 58 V88.4" stroke-width="2" />
<path d="M1054.6 64.6 V82 H1044.6 Z" fill="none" stroke-width="1.1"/>
<path d="M1064 66 V81 H1072.6 Z" fill="none" stroke-width="2"/>
</g>
</svg>

<div id="hdr"><div id="logo"><i style="left:0.00px;top:0.00px;background:#f04a24">T</i><i style="left:15.05px;top:0.00px;background:#f5793b">I</i><i style="left:30.10px;top:0.00px;background:#f8943f">N</i><i style="left:0.00px;top:15.00px;background:#2fb457">K</i><i style="left:15.05px;top:15.00px;background:#86c518">E</i><i style="left:30.10px;top:15.00px;background:#c4ca2d">R</i><i style="left:0.00px;top:30.00px;background:#0a60b0">C</i><i style="left:15.05px;top:30.00px;background:#3b8fcb">A</i><i style="left:30.10px;top:30.00px;background:#63b4de">D</i></div><div id="title">FUNKO 3D</div></div>

<svg class="abs" style="left:55px;top:8px" width="32" height="32" viewBox="55 8 32 32">
<rect x="59.8" y="14.2" width="21.4" height="18.6" rx="1.8" fill="#fdfdfd" stroke="#1e1e1e" stroke-width="1.5"/>
<path d="M59.8 14.5 H81.2" stroke="#1e1e1e" stroke-width="2.2"/>
<path d="M64 20.4 h2.4 M64 24.9 h2.4 M64 29.3 h2.4" stroke="#111" stroke-width="2"/>
<path d="M68.4 20.4 h8.6 M68.4 24.9 h8.6 M68.4 29.3 h8.6" stroke="#111" stroke-width="1.7"/>
</svg>

<div id="topline"></div>
<div id="tip"><b>Agrupar</b><span>Ctrl + G</span></div>

<svg class="abs" style="left:0;top:0;pointer-events:none" width="1096" height="658" viewBox="0 0 1096 658">

<g fill="none" stroke="#ff0a80" stroke-width="3">
<rect x="354.6" y="116.5" width="459.1" height="397" />
<rect x="888.6" y="54.5" width="52" height="46" rx="1.5"/>
<path d="M285.5 249.5 L322 224" stroke-width="2.6" stroke-linecap="round"/>
<path d="M877 20.5 L889 39" stroke-width="3" stroke-linecap="round"/>
</g>
<path d="M332.5 216.8 L316.5 220.5 L323.5 230.5 Z" fill="#ff0a80"/>
<path d="M895.8 49.4 L883.2 40.8 L892.2 34.8 Z" fill="#ff0a80"/>

</svg>

</body></html>
